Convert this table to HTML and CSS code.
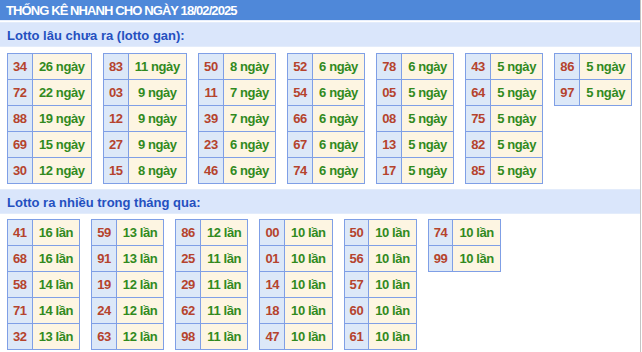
FILE: index.html
```html
<!DOCTYPE html>
<html lang="vi">
<head>
<meta charset="utf-8">
<title>Thống kê nhanh</title>
<link rel="stylesheet" href="styles.css">
</head>
<body>
<div class="wrap">
  <div class="title">THỐNG KÊ NHANH CHO NGÀY 18/02/2025</div>
  <div class="sub">Lotto lâu chưa ra (lotto gan):</div>
  <div class="groups gan">
    <table class="tk"><tr><td class="n">34</td><td class="v">26 ngày</td></tr><tr><td class="n">72</td><td class="v">22 ngày</td></tr><tr><td class="n">88</td><td class="v">19 ngày</td></tr><tr><td class="n">69</td><td class="v">15 ngày</td></tr><tr><td class="n">30</td><td class="v">12 ngày</td></tr></table>
    <table class="tk"><tr><td class="n">83</td><td class="v">11 ngày</td></tr><tr><td class="n">03</td><td class="v">9 ngày</td></tr><tr><td class="n">12</td><td class="v">9 ngày</td></tr><tr><td class="n">27</td><td class="v">9 ngày</td></tr><tr><td class="n">15</td><td class="v">8 ngày</td></tr></table>
    <table class="tk"><tr><td class="n">50</td><td class="v">8 ngày</td></tr><tr><td class="n">11</td><td class="v">7 ngày</td></tr><tr><td class="n">39</td><td class="v">7 ngày</td></tr><tr><td class="n">23</td><td class="v">6 ngày</td></tr><tr><td class="n">46</td><td class="v">6 ngày</td></tr></table>
    <table class="tk"><tr><td class="n">52</td><td class="v">6 ngày</td></tr><tr><td class="n">54</td><td class="v">6 ngày</td></tr><tr><td class="n">66</td><td class="v">6 ngày</td></tr><tr><td class="n">67</td><td class="v">6 ngày</td></tr><tr><td class="n">74</td><td class="v">6 ngày</td></tr></table>
    <table class="tk"><tr><td class="n">78</td><td class="v">6 ngày</td></tr><tr><td class="n">05</td><td class="v">5 ngày</td></tr><tr><td class="n">08</td><td class="v">5 ngày</td></tr><tr><td class="n">13</td><td class="v">5 ngày</td></tr><tr><td class="n">17</td><td class="v">5 ngày</td></tr></table>
    <table class="tk"><tr><td class="n">43</td><td class="v">5 ngày</td></tr><tr><td class="n">64</td><td class="v">5 ngày</td></tr><tr><td class="n">75</td><td class="v">5 ngày</td></tr><tr><td class="n">82</td><td class="v">5 ngày</td></tr><tr><td class="n">85</td><td class="v">5 ngày</td></tr></table>
    <table class="tk"><tr><td class="n">86</td><td class="v">5 ngày</td></tr><tr><td class="n">97</td><td class="v">5 ngày</td></tr></table>
  </div>
  <div class="sub">Lotto ra nhiều trong tháng qua:</div>
  <div class="groups lan">
    <table class="tk"><tr><td class="n">41</td><td class="v">16 lần</td></tr><tr><td class="n">68</td><td class="v">16 lần</td></tr><tr><td class="n">58</td><td class="v">14 lần</td></tr><tr><td class="n">71</td><td class="v">14 lần</td></tr><tr><td class="n">32</td><td class="v">13 lần</td></tr></table>
    <table class="tk"><tr><td class="n">59</td><td class="v">13 lần</td></tr><tr><td class="n">91</td><td class="v">13 lần</td></tr><tr><td class="n">19</td><td class="v">12 lần</td></tr><tr><td class="n">24</td><td class="v">12 lần</td></tr><tr><td class="n">63</td><td class="v">12 lần</td></tr></table>
    <table class="tk"><tr><td class="n">86</td><td class="v">12 lần</td></tr><tr><td class="n">25</td><td class="v">11 lần</td></tr><tr><td class="n">29</td><td class="v">11 lần</td></tr><tr><td class="n">62</td><td class="v">11 lần</td></tr><tr><td class="n">98</td><td class="v">11 lần</td></tr></table>
    <table class="tk"><tr><td class="n">00</td><td class="v">10 lần</td></tr><tr><td class="n">01</td><td class="v">10 lần</td></tr><tr><td class="n">14</td><td class="v">10 lần</td></tr><tr><td class="n">18</td><td class="v">10 lần</td></tr><tr><td class="n">47</td><td class="v">10 lần</td></tr></table>
    <table class="tk"><tr><td class="n">50</td><td class="v">10 lần</td></tr><tr><td class="n">56</td><td class="v">10 lần</td></tr><tr><td class="n">57</td><td class="v">10 lần</td></tr><tr><td class="n">60</td><td class="v">10 lần</td></tr><tr><td class="n">61</td><td class="v">10 lần</td></tr></table>
    <table class="tk"><tr><td class="n">74</td><td class="v">10 lần</td></tr><tr><td class="n">99</td><td class="v">10 lần</td></tr></table>
  </div>
</div>
</body>
</html>
```
FILE: styles.css
```css
html, body {
  margin: 0;
  padding: 0;
  background: #ffffff;
}
.wrap {
  width: 641px;
  border-right: 1px solid #c4c4c4;
  font-family: "Liberation Sans", Arial, sans-serif;
  min-height: 352px;
  box-sizing: border-box;
}
.title {
  height: 21px;
  line-height: 21px;
  background: #4f88d9;
  border-bottom: 1px solid #e9f0fc;
  box-sizing: border-box;
  color: #ffffff;
  font-weight: bold;
  font-size: 13px;
  letter-spacing: -0.9px;
  padding-left: 6px;
  white-space: nowrap;
}
.sub {
  margin-top: 1px;
  height: 25px;
  line-height: 25px;
  background: #dae6fb;
  border-top: 1px solid #e3ecfb;
  border-bottom: 1px solid #e3ecfb;
  box-sizing: border-box;
  color: #2450c0;
  font-weight: bold;
  font-size: 13px;
  padding-left: 7px;
}
.groups {
  display: flex;
  align-items: flex-start;
  gap: 11px;
  padding: 6px 7px 4px;
}
.groups.lan {
  padding-top: 5px;
}
.tk {
  border-collapse: collapse;
  font-size: 13px;
  font-weight: bold;
  letter-spacing: -0.4px;
}
.tk td {
  height: 25px;
  padding: 0;
  border: 1px solid #7f9fe6;
  text-align: center;
  white-space: nowrap;
}
.tk .n {
  background: #dce8f8;
  color: #b5432d;
  padding: 0 5px;
}
.tk .v {
  background: #fdf5e2;
  color: #318a1e;
  padding: 0 6px;
}
.gan .tk .v {
  padding: 0 6.3px;
}
```
